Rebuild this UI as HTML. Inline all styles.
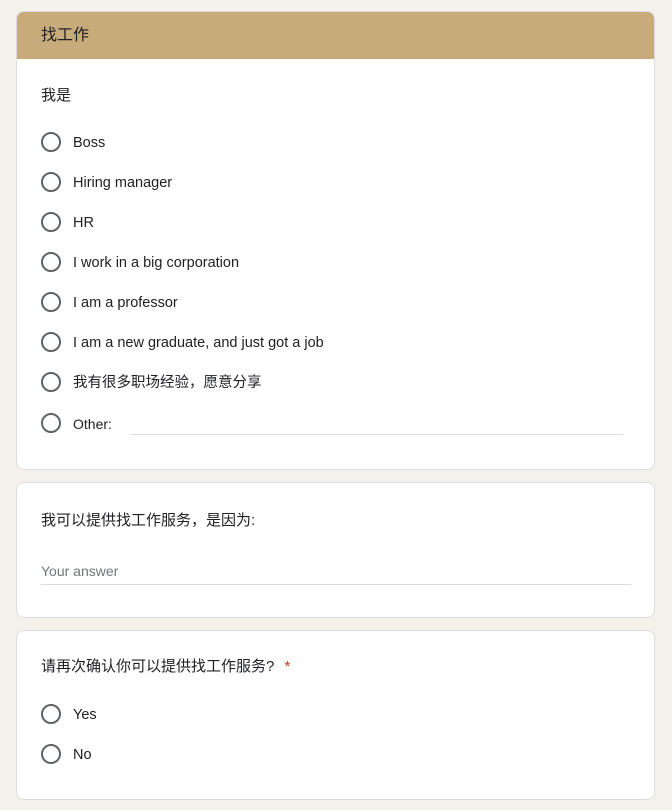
<!DOCTYPE html>
<html><head><meta charset="utf-8"><style>
body{margin:0;background:#f4f0ea;width:672px;height:810px;position:relative;font-family:"Liberation Sans","Noto Sans CJK SC",sans-serif;color:#202124;overflow:hidden}
.card{position:absolute;left:16px;width:637px;background:#fff;border:1px solid #dadce0;border-radius:8px;overflow:hidden}
.hdr{position:absolute;left:0;top:0;width:100%;height:47px;background:#c8ab7b}
.t{position:absolute;font-size:15px;white-space:nowrap;line-height:20px}
.r{position:absolute;left:24px;width:16px;height:16px;border:2px solid #5f6368;border-radius:50%}
.l{position:absolute;left:56px;font-size:14.5px;white-space:nowrap;color:#202124;line-height:20px}
.line{position:absolute;height:1px;background:#dadce0}
</style></head><body>
<div class="card" style="top:11px;height:457px">
 <div class="hdr"></div>
 <div class="t" style="left:24px;top:14px;font-size:16px">找工作</div>
 <div class="t" style="left:24px;top:74px">我是</div>
 <div class="r" style="top:120px"></div><div class="l" style="top:121px">Boss</div>
 <div class="r" style="top:160px"></div><div class="l" style="top:161px">Hiring manager</div>
 <div class="r" style="top:200px"></div><div class="l" style="top:201px">HR</div>
 <div class="r" style="top:240px"></div><div class="l" style="top:241px">I work in a big corporation</div>
 <div class="r" style="top:280px"></div><div class="l" style="top:281px">I am a professor</div>
 <div class="r" style="top:320px"></div><div class="l" style="top:321px">I am a new graduate, and just got a job</div>
 <div class="r" style="top:360px"></div><div class="l" style="top:361px">我有很多职场经验，愿意分享</div>
 <div class="r" style="top:401px"></div><div class="l" style="top:402px;font-size:14px">Other:</div>
 <div class="line" style="left:114px;top:422px;width:492px"></div>
</div>
<div class="card" style="top:482px;height:134px">
 <div class="t" style="left:24px;top:28px">我可以提供找工作服务，是因为:</div>
 <div class="t" style="left:24px;top:78px;font-size:14px;color:#70757a">Your answer</div>
 <div class="line" style="left:24px;top:101px;width:590px"></div>
</div>
<div class="card" style="top:630px;height:168px">
 <div class="t" style="left:24px;top:26px">请再次确认你可以提供找工作服务? <span style="color:#d93025;margin-left:6px">*</span></div>
 <div class="r" style="top:73px"></div><div class="l" style="top:74px">Yes</div>
 <div class="r" style="top:113px"></div><div class="l" style="top:114px">No</div>
</div>
</body></html>
